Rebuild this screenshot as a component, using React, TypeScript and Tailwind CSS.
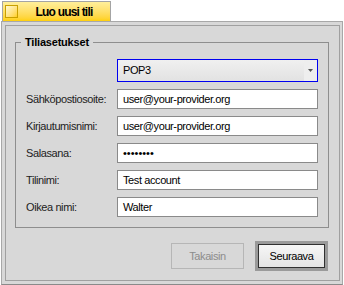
import React from 'react';

const rows = [
    { label: 'Sähköpostiosoite:', value: 'user@your-provider.org' },
    { label: 'Kirjautumisnimi:', value: 'user@your-provider.org' },
    { label: 'Salasana:', value: '••••••••', password: true },
    { label: 'Tilinimi:', value: 'Test account' },
    { label: 'Oikea nimi:', value: 'Walter' },
];

export default function App() {
    return (
        <div className="w-[344px] h-[285px] bg-white overflow-hidden font-['Liberation_Sans',Arial,sans-serif] text-[11px] tracking-[-0.4px] text-black">
            {/* tab strip */}
            <div className="h-[21px] flex">
                <div className="ml-[2px] mt-[1px] w-[109px] h-[20px] border-t border-l border-r border-[#a4a4a4] bg-gradient-to-b from-[#ffef9a] to-[#ffd000] flex items-center">
                    <div className="ml-[2px] w-[13px] h-[13px] border border-[#c9a000] bg-gradient-to-br from-[#fff8d0] to-[#ffd000]" />
                    <div className="flex-1 text-center font-bold text-[12px] tracking-[-0.8px] leading-none">Luo uusi tili</div>
                </div>
            </div>

            {/* panel */}
            <div className="ml-[1px] w-[342px] h-[264px] border border-[#a8a8a8] border-b-[#8a8a8a] bg-[#d8d8d8] pt-[3px] pl-[3px] pr-[2px] pb-[3px]">
                <div className="h-full border border-[#a0a0a0] pt-[16px] pl-[9px] pr-[10px] flex flex-col">
                    <div className="relative w-[314px] h-[186px] border border-[#8e8e8e] pt-[16px] pl-[10px] pr-[10px]">
                        <div className="absolute left-[5px] top-[-8px] px-[4px] bg-[#d8d8d8] font-bold tracking-[-0.2px] leading-[14px]">
                            Tiliasetukset
                        </div>
                        <div className="flex justify-end">
                            <div className="w-[201px] h-[23px] border border-[#0000f0] bg-gradient-to-b from-[#f0f0f0] to-[#e2e2e2] flex items-center">
                                <span className="pl-[5px] flex-1">POP3</span>
                                <div className="w-[13px] h-full bg-[#eeeeee] flex items-center justify-center">
                                    <svg width="5" height="3" viewBox="0 0 5 3">
                                        <path d="M0 0h5L2.5 3z" fill="#555" />
                                    </svg>
                                </div>
                            </div>
                        </div>
                        {rows.map((r) => (
                            <div key={r.label} className="mt-[7px] flex items-center">
                                <div className="w-[91px] text-[#222]">{r.label}</div>
                                <div className="w-[201px] h-[20px] border border-[#8a8a8a] bg-white flex items-center pl-[5px]">
                                    {r.password ? (
                                        <span className="text-[11px] tracking-[0px]">{r.value}</span>
                                    ) : (
                                        r.value
                                    )}
                                </div>
                            </div>
                        ))}
                    </div>

                    <div className="mt-[13px] w-[314px] flex items-center justify-end gap-[11px] pr-[1px]">
                        <div className="w-[73px] h-[26px] border border-[#b6b6b6] bg-[#d8d8d8] text-[#8c8c8c] flex items-center justify-center">
                            Takaisin
                        </div>
                        <div className="w-[73px] h-[30px] border-[3px] border-[#9a9a9a]">
                            <div className="h-full border border-[#303030] bg-gradient-to-b from-[#f6f6f6] to-[#e4e4e4] flex items-center justify-center">
                                Seuraava
                            </div>
                        </div>
                    </div>
                </div>
            </div>
        </div>
    );
}
